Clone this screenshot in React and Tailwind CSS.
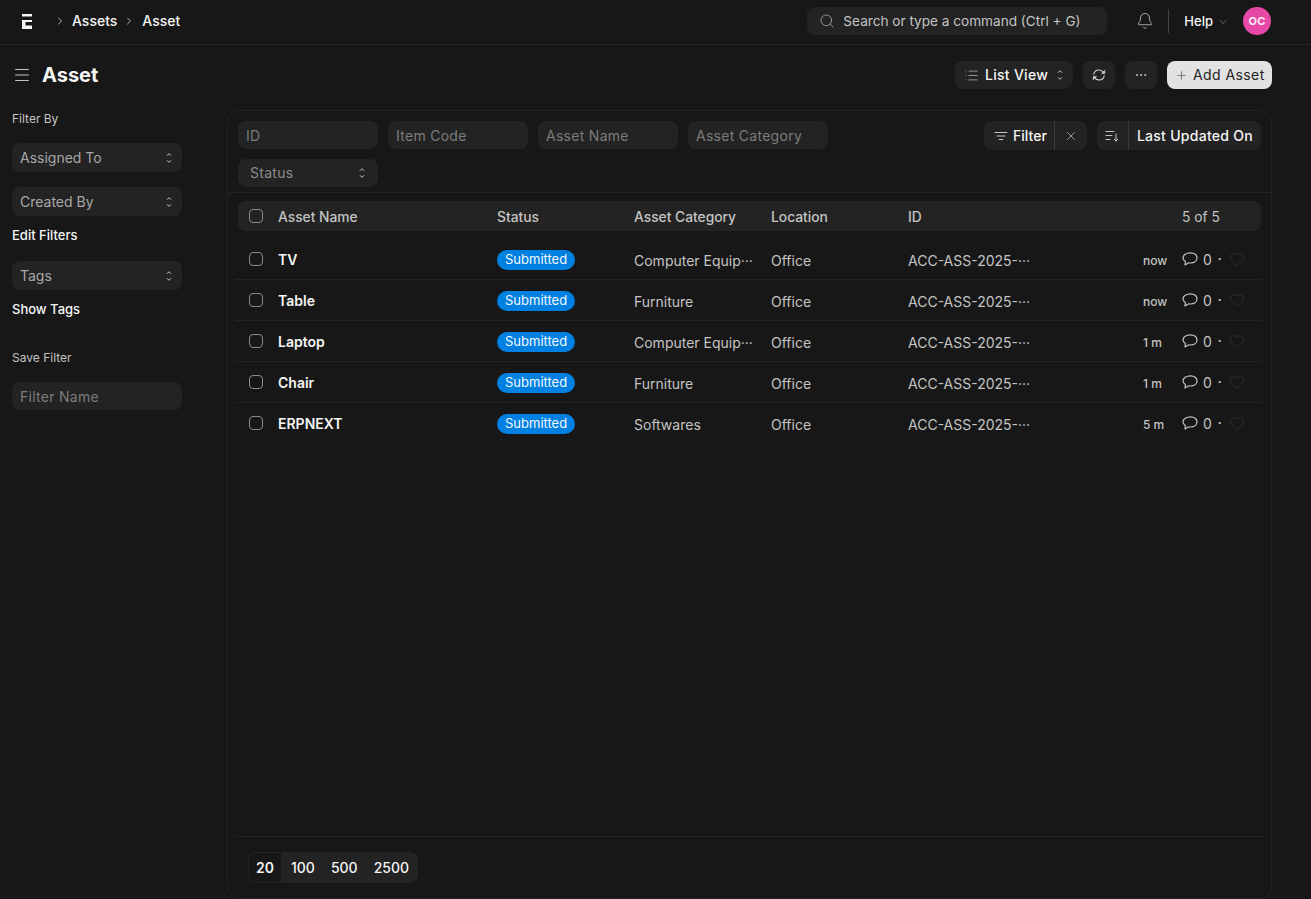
import React from 'react';
import { ChevronRight, ChevronDown, Search, Bell, List, Ellipsis, Plus, X, Heart } from 'lucide-react';

const rows = [
  { name: 'TV', category: 'Computer Equip···', time: 'now' },
  { name: 'Table', category: 'Furniture', time: 'now' },
  { name: 'Laptop', category: 'Computer Equip···', time: '1 m' },
  { name: 'Chair', category: 'Furniture', time: '1 m' },
  { name: 'ERPNEXT', category: 'Softwares', time: '5 m' },
];

function UpDown({ className }) {
  return (
    <svg viewBox="0 0 8 14" className={className} fill="none" stroke="currentColor" strokeWidth="1" strokeLinecap="round" strokeLinejoin="round">
      <path d="M2.3 4.4 4 2.7l1.7 1.7" />
      <path d="M2.3 9.6 4 11.3l1.7-1.7" />
    </svg>
  );
}

function Logo() {
  return (
    <svg viewBox="0 0 10 15" className="w-[10px] h-[15px]" fill="#f5f5f5">
      <path d="M0 0h10v2.5H0z" />
      <path d="M0 6h10v2H3.5v3.5H10V15H0z" />
    </svg>
  );
}

function CommentIcon() {
  return (
    <svg viewBox="0 0 16 14" className="w-4 h-[14px]" fill="none" stroke="currentColor" strokeWidth="1.2" strokeLinejoin="round">
      <path d="M8.5.8C4.400.8 1 2.900 1 5.800c0 1.500.9 2.900 2.400 3.700L3 13l3.700-2.200c.6.1 1.200.2 1.800.2 3.900 0 6.500-2.300 6.500-5.200S12.400.8 8.500.8z" />
    </svg>
  );
}

function SyncIcon() {
  return (
    <svg viewBox="0 0 16 16" className="w-4 h-4" fill="none" stroke="#d4d4d4" strokeWidth="1.1" strokeLinecap="round">
      <path d="M2.800 7.200C3.300 4.700 5.400 3 8 3c1.900 0 3.500.9 4.400 2.400" />
      <path d="M13.200 8.800C12.700 11.300 10.600 13 8 13c-1.900 0-3.500-.9-4.400-2.400" />
      <path d="M13.800 3.600v3h-3z" fill="#d4d4d4" strokeWidth="0.6" strokeLinejoin="round" />
      <path d="M2.200 12.400v-3h3z" fill="#d4d4d4" strokeWidth="0.6" strokeLinejoin="round" />
    </svg>
  );
}

function SidebarSelect({ label }) {
  return (
    <div className="flex items-center justify-between h-[29px] rounded-lg bg-[#232323] pl-2 pr-[9px] text-sm text-[#a8a8a8]">
      <span>{label}</span>
      <UpDown className="w-2 h-[14px] text-[#c4c4c4]" />
    </div>
  );
}

function FilterInput({ label }) {
  return (
    <div className="flex items-center w-[140px] h-[28px] rounded-lg bg-[#232323] px-2 pt-[2px] text-sm tracking-[0.02em] text-[#7c7c7c]">{label}</div>
  );
}

function Checkbox() {
  return <span className="block w-[14px] h-[14px] rounded-[4px] border border-[#8a8a8a]" />;
}

function Row({ row, last }) {
  return (
    <div className={`flex items-center h-[41px] mr-[9px] pl-[14px] border-b ${last ? 'border-transparent' : 'border-[#232323]'}`}>
      <div className="w-[29px] shrink-0"><Checkbox /></div>
      <div className="w-[219px] shrink-0 mt-[2px] text-sm font-semibold text-[#f5f5f5]">{row.name}</div>
      <div className="w-[137px] shrink-0 -mt-[2px]">
        <span className="inline-flex items-center h-5 px-2 rounded-full bg-[#0080e0] text-[13px] text-[#f2f8fd]">Submitted</span>
      </div>
      <div className="w-[137px] shrink-0 mt-[4px] text-sm text-[#c4c4c4]">{row.category}</div>
      <div className="w-[137px] shrink-0 mt-[4px] text-sm text-[#c4c4c4]">Office</div>
      <div className="w-[235px] shrink-0 mt-[4px] text-sm text-[#c4c4c4]">ACC-ASS-2025-···</div>
      <div className="w-[39px] shrink-0 mt-[4px] text-xs font-medium text-[#c4c4c4]">{row.time}</div>
      <div className="flex items-center text-[#c4c4c4]">
        <CommentIcon />
        <span className="ml-[5px] mt-[2px] text-sm">0</span>
        <span className="ml-[6px] text-xs font-bold">·</span>
        <Heart size={16} strokeWidth={1} className="ml-[7px] text-[#3a3a3a]" />
      </div>
    </div>
  );
}

export default function App() {
  return (
    <div className="h-[899px] w-full overflow-hidden bg-[#171717] text-[#f5f5f5] font-['Inter',sans-serif]">
      {/* navbar */}
      <div className="flex items-center h-[45px] pb-[2px] border-b border-[#232323] pl-[22px] pr-10">
        <Logo />
        <ChevronRight size={12} strokeWidth={1.5} className="ml-[22px] text-[#e0e0e0]" />
        <span className="ml-[6px] text-sm font-medium">Assets</span>
        <ChevronRight size={12} strokeWidth={1.5} className="ml-[6px] text-[#e0e0e0]" />
        <span className="ml-[7px] text-sm font-medium">Asset</span>
        <div className="flex items-center ml-auto w-[300px] h-[28px] rounded-lg bg-[#232323] pl-[12px] text-[13.6px] text-[#c4c4c4]">
          <Search size={16} strokeWidth={1.2} className="text-[#b0b0b0]" />
          <span className="ml-[8px]">Search or type a command (Ctrl + G)</span>
        </div>
        <Bell size={18} strokeWidth={1.1} className="ml-[29px] text-[#c4c4c4]" />
        <div className="ml-[14px] w-px h-6 bg-[#444444]" />
        <span className="ml-[15px] mt-[1px] text-[13px] font-medium">Help</span>
        <ChevronDown size={12} strokeWidth={1.2} className="ml-1 mt-[1px] text-[#a8a8a8]" />
        <div className="flex items-center justify-center ml-[14px] w-[28px] h-[28px] rounded-full bg-[#e648a6] text-[11px] font-bold tracking-wide text-[#fdeaf5]">OC</div>
      </div>

      {/* page head */}
      <div className="flex items-center h-[60px] pl-[15px] pr-[39px]">
        <svg viewBox="0 0 14 14" className="w-[14px] h-[14px]" fill="none" stroke="#c4c4c4" strokeWidth="1.1" strokeLinecap="round">
          <path d="M.6 1.500h12.800M.6 7h12.800M.6 12.500h12.800" />
        </svg>
        <h1 className="ml-[13px] text-xl font-bold">Asset</h1>
        <div className="ml-auto flex items-center gap-[10px] text-sm font-medium">
          <div className="flex items-center h-[28px] w-[118px] rounded-lg bg-[#232323] pl-[9px]">
            <List size={15} strokeWidth={1.1} className="text-[#c4c4c4]" />
            <span className="ml-[6px] tracking-[0.02em]">List View</span>
            <UpDown className="ml-[8px] w-2 h-[14px] text-[#c4c4c4]" />
          </div>
          <div className="flex items-center justify-center w-[32px] h-[28px] rounded-lg bg-[#232323]">
            <SyncIcon />
          </div>
          <div className="flex items-center justify-center w-[32px] h-[28px] rounded-lg bg-[#232323]">
            <Ellipsis size={14} strokeWidth={1.4} className="text-[#d4d4d4]" />
          </div>
          <div className="flex items-center h-[28px] w-[105px] rounded-lg bg-[#e2e2e2] pl-[8px] text-[#232323] font-normal">
            <Plus size={13} strokeWidth={1.3} className="text-[#555555]" />
            <span className="ml-[5px] tracking-[0.03em]">Add Asset</span>
          </div>
        </div>
      </div>

      <div className="flex pl-3 pr-[39px] h-[794px]">
        {/* sidebar */}
        <div className="w-[170px] shrink-0">
          <div className="mt-[6px] text-xs text-[#c4c4c4]">Filter By</div>
          <div className="mt-[16px]"><SidebarSelect label="Assigned To" /></div>
          <div className="mt-[15px]"><SidebarSelect label="Created By" /></div>
          <div className="mt-[11px] text-[13px] leading-4 font-medium">Edit Filters</div>
          <div className="mt-[18px]"><SidebarSelect label="Tags" /></div>
          <div className="mt-[11px] text-[13px] leading-4 font-medium">Show Tags</div>
          <div className="mt-[33px] text-xs text-[#c4c4c4]">Save Filter</div>
          <div className="flex items-center mt-[16px] h-[28px] rounded-lg bg-[#232323] px-2 pt-[2px] text-sm tracking-[0.02em] text-[#7c7c7c]">Filter Name</div>
        </div>

        {/* main card */}
        <div className="ml-[45px] flex-1 h-[789px] mt-[5px] flex flex-col rounded-xl border border-[#232323]">
          <div className="flex justify-between h-[82px] border-b border-[#232323] pl-[10px] pr-[10px] pt-[10px]">
            <div className="flex flex-wrap content-start gap-[10px] w-[600px]">
              <FilterInput label="ID" />
              <FilterInput label="Item Code" />
              <FilterInput label="Asset Name" />
              <FilterInput label="Asset Category" />
              <div className="flex items-center justify-between w-[140px] h-[28px] rounded-lg bg-[#232323] pl-3 pr-3 text-sm tracking-[0.02em] text-[#8a8a8a]">
                <span>Status</span>
                <UpDown className="w-2 h-[14px] text-[#c4c4c4]" />
              </div>
            </div>
            <div className="flex gap-[10px] text-sm font-medium">
              <div className="flex items-center h-[29px] rounded-lg bg-[#232323]">
                <div className="flex items-center h-full pl-[10px] pr-[7px] border-r border-[#3a3a3a]">
                  <svg viewBox="0 0 14 10" className="w-[14px] h-[10px]" fill="none" stroke="#c4c4c4" strokeWidth="1" strokeLinecap="round">
                    <path d="M1 1.500h12M3 5h8M5.200 8.500h3.600" />
                  </svg>
                  <span className="ml-[5px]">Filter</span>
                </div>
                <div className="flex items-center justify-center w-8"><X size={14} strokeWidth={1.1} className="text-[#d4d4d4]" /></div>
              </div>
              <div className="flex items-center h-[29px] rounded-lg bg-[#232323]">
                <div className="flex items-center justify-center h-full w-[32px] border-r border-[#3a3a3a]">
                  <svg viewBox="0 0 14 12" className="w-[14px] h-[12px]" fill="none" stroke="#c4c4c4" strokeWidth="1" strokeLinecap="round" strokeLinejoin="round">
                    <path d="M1 1.500h8M1 5.500h6M1 9.500h4M11 4v7M9.300 9.300 11 11l1.700-1.700" />
                  </svg>
                </div>
                <span className="pl-2 pr-2 tracking-[0.02em]">Last Updated On</span>
              </div>
            </div>
          </div>

          {/* header row */}
          <div className="flex items-center h-[30px] mt-2 mx-[10px] rounded-lg bg-[#232323] pl-[11px] text-[13.8px] font-medium text-[#c4c4c4]">
            <div className="w-[29px] shrink-0"><Checkbox /></div>
            <div className="w-[219px] shrink-0 mt-[2px]">Asset Name</div>
            <div className="w-[137px] shrink-0 mt-[2px]">Status</div>
            <div className="w-[137px] shrink-0 mt-[2px]">Asset Category</div>
            <div className="w-[137px] shrink-0 mt-[2px]">Location</div>
            <div className="w-[274px] shrink-0 mt-[2px]">ID</div>
            <div className="mt-[2px] font-normal">5 of 5</div>
          </div>

          <div className="mt-2 pl-[7px]">
            {rows.map((row, i) => (
              <Row key={row.name} row={row} last={i === rows.length - 1} />
            ))}
          </div>

          {/* footer */}
          <div className="mt-auto mx-[6px] border-t border-[#232323] h-[62px] pt-[15px] pl-[14px]">
            <div className="inline-flex items-center h-[31px] rounded-lg bg-[#232323] text-sm font-medium">
              <div className="flex items-center justify-center h-full w-[34px] rounded-l-lg bg-[#171717] border border-[#232323] font-semibold">20</div>
              <div className="flex items-center gap-[16px] pl-[9px] pr-[9px]">
                <span>100</span>
                <span>500</span>
                <span>2500</span>
              </div>
            </div>
          </div>
        </div>
      </div>
    </div>
  );
}
